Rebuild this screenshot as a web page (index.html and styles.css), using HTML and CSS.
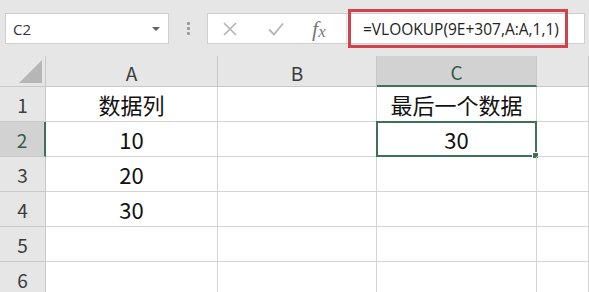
FILE: index.html
```html
<!DOCTYPE html>
<html lang="zh">

<head>
    <meta charset="UTF-8">
    <meta name="viewport" content="width=device-width, initial-scale=1.0">
    <title>VLOOKUP</title>
    <link rel="stylesheet" href="styles.css">
</head>

<body>
    <div class="formulabar">
        <div class="namebox">
            <span>C2</span>
            <span class="arrow"></span>
        </div>
        <div class="dots"><i></i><i></i><i></i></div>
        <div class="formulabox">
            <div class="buttons">
                <svg width="16" height="16" viewBox="0 0 16 16">
                    <path d="M2 2 L14 14 M14 2 L2 14" stroke="#b4b4b4" stroke-width="1.6" fill="none" />
                </svg>
                <svg width="18" height="16" viewBox="0 0 18 16">
                    <path d="M2 8.5 L7 13.5 L16 2.5" stroke="#b4b4b4" stroke-width="1.8" fill="none" />
                </svg>
                <span class="fx">f<span class="fx-x">x</span></span>
            </div>
            <div class="formula">=VLOOKUP(9E+307,A:A,1,1)</div>
        </div>
    </div>

    <div class="sheet">
        <div class="corner"><span class="tri"></span></div>
        <div class="colhead">A</div>
        <div class="colhead">B</div>
        <div class="colhead active-col">C</div>
        <div class="colhead"></div>

        <div class="rowhead">1</div>
        <div class="cell">数据列</div>
        <div class="cell"></div>
        <div class="cell">最后一个数据</div>
        <div class="cell"></div>

        <div class="rowhead active-row">2</div>
        <div class="cell">10</div>
        <div class="cell"></div>
        <div class="cell selected">30<span class="handle"></span></div>
        <div class="cell"></div>

        <div class="rowhead">3</div>
        <div class="cell">20</div>
        <div class="cell"></div>
        <div class="cell"></div>
        <div class="cell"></div>

        <div class="rowhead">4</div>
        <div class="cell">30</div>
        <div class="cell"></div>
        <div class="cell"></div>
        <div class="cell"></div>

        <div class="rowhead">5</div>
        <div class="cell"></div>
        <div class="cell"></div>
        <div class="cell"></div>
        <div class="cell"></div>

        <div class="rowhead">6</div>
        <div class="cell"></div>
        <div class="cell"></div>
        <div class="cell"></div>
        <div class="cell"></div>
    </div>
</body>

</html>
```

FILE: styles.css
```css
body {
    margin: 0;
    background-color: #ffffff;
    font-family: "Noto Sans CJK SC", "Noto Sans", sans-serif;
    color: #1e1e1e;
    overflow: hidden;
}

.formulabar {
    height: 56px;
    background-color: #e6e6e6;
    display: flex;
    align-items: flex-start;
    padding: 13px 4px 0 5px;
    box-sizing: border-box;
}

.namebox {
    width: 164px;
    height: 31px;
    background-color: white;
    border: 1px solid #cfcfcf;
    box-sizing: border-box;
    display: flex;
    align-items: center;
    justify-content: space-between;
    padding: 0 8px 0 7px;
    font-family: "Open Sans", "Noto Sans", sans-serif;
    font-size: 15px;
    color: #333;
}

.arrow {
    width: 0;
    height: 0;
    border-left: 4px solid transparent;
    border-right: 4px solid transparent;
    border-top: 4px solid #606060;
}

.dots {
    width: 38px;
    display: flex;
    flex-direction: column;
    align-items: center;
    gap: 2px;
    padding-top: 9px;
}

.dots i {
    width: 3px;
    height: 3px;
    background-color: #9a9a9a;
    border-radius: 1px;
}

.formulabox {
    flex: 1;
    height: 31px;
    background-color: white;
    border: 1px solid #cfcfcf;
    box-sizing: border-box;
    display: flex;
    align-items: center;
}

.buttons {
    width: 139px;
    display: flex;
    align-items: center;
    gap: 29px;
    padding-left: 14px;
    box-sizing: border-box;
    height: 100%;
    border-right: 1px solid #e0e0e0;
}

.fx {
    font-family: "Liberation Serif", serif;
    font-style: italic;
    font-size: 22px;
    color: #7a7a7a;
    line-height: 1;
    margin-left: -2px;
}

.fx-x {
    font-size: 17px;
    position: relative;
    top: 1px;
}

.formula {
    height: 39px;
    margin-left: 1px;
    padding: 0 0 0 12px;
    width: 220px;
    box-sizing: border-box;
    border: 3px solid #d0434c;
    display: flex;
    align-items: center;
    font-family: "Open Sans", "Noto Sans", sans-serif;
    font-size: 15.5px;
    color: #222;
    white-space: nowrap;
}

.sheet {
    display: grid;
    grid-template-columns: 46px 172px 159px 160px 1fr;
    grid-template-rows: 31px repeat(6, 35px);
}

.corner,
.colhead,
.rowhead {
    background-color: #e6e6e6;
    border-right: 1px solid #c8c8c8;
    border-bottom: 1px solid #c8c8c8;
    box-sizing: border-box;
    display: flex;
    align-items: center;
    justify-content: center;
    color: #3c3c3c;
    font-size: 19px;
}

.corner {
    align-items: flex-end;
    justify-content: flex-end;
    padding: 0 3px 3px 0;
}

.tri {
    width: 0;
    height: 0;
    border-left: 23px solid transparent;
    border-bottom: 23px solid #b6b6b6;
}

.colhead {
    padding-top: 2px;
}

.active-col {
    background-color: #d2d2d2;
    border-bottom: 2px solid #3f7058;
    color: #2f5c46;
}

.active-row {
    background-color: #d2d2d2;
    border-right: 2px solid #3f7058;
    color: #2f5c46;
}

.cell {
    border-right: 1px solid #d4d4d4;
    border-bottom: 1px solid #d4d4d4;
    box-sizing: border-box;
    display: flex;
    align-items: center;
    justify-content: center;
    font-size: 22px;
    color: #111;
    position: relative;
}

.selected {
    border: 2px solid #3f7058;
    margin: -1px 0 0 -1px;
    width: calc(100% + 1px);
    height: calc(100% + 1px);
}

.handle {
    position: absolute;
    right: -4px;
    bottom: -4px;
    width: 5px;
    height: 5px;
    background-color: #3f7058;
    border: 1px solid white;
}
```
